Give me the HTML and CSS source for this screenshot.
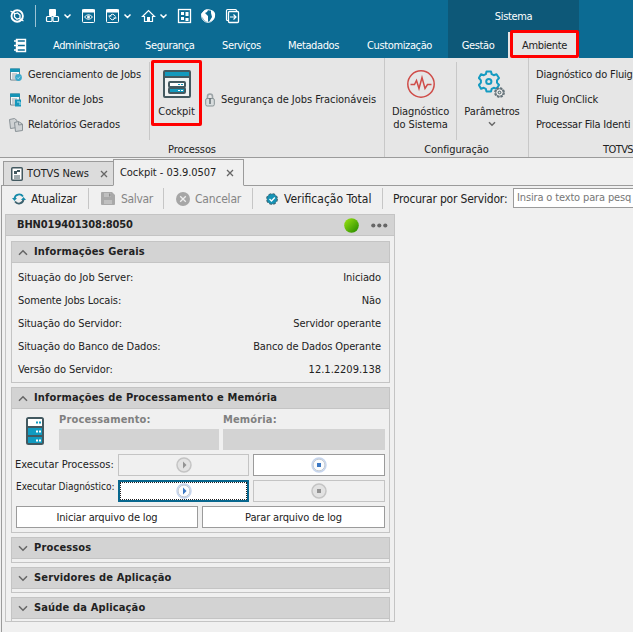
FILE: index.html
```html
<!DOCTYPE html>
<html lang="pt-BR">
<head>
<meta charset="utf-8">
<title>Cockpit</title>
<link rel="stylesheet" href="styles.css">
</head>
<body>
<header class="top">
  <div class="quick">
    <svg class="quick-icons" width="250" height="32" viewBox="0 0 250 32" fill="none" stroke="#fff">
      <circle cx="17.200" cy="16" r="5.700" stroke-width="1.900"/>
      <path d="M14.500 14l3-1 2.500 2v3l-3 1.200-2.500-2.200zM10.500 11l4.500 2.500M23.500 21l-4.500-2.500" stroke-width="1.300"/>
      <path d="M35.500 5v22" stroke="#9cc3d4"/>
      <rect x="49" y="9" width="7" height="7" rx="1" fill="#fff" stroke="none"/>
      <rect x="46.500" y="16.500" width="5.500" height="5" rx="1" stroke-width="1.200"/><rect x="53" y="16.500" width="5.500" height="5" rx="1" stroke-width="1.200"/>
      <path d="M64.500 14.500l3 3 3-3M124.500 14.500l3 3 3-3M160.500 14.500l3 3 3-3" stroke-width="1.500"/>
      <rect x="82.500" y="9.500" width="12" height="13" rx="1"/><path d="M82 11h13" stroke-width="3"/>
      <path d="M84.500 17q4-4.500 8 0q-4 4.500-8 0z"/><circle cx="88.500" cy="17" r="1" fill="#fff"/>
      <rect x="106.500" y="9.500" width="12" height="13" rx="1"/><path d="M106 11h13" stroke-width="3"/>
      <path d="M109.500 16.500q3-4.500 6 0M109.500 17.500q3 4.500 6 0M108.500 16h3M113.500 18h3"/>
      <path d="M142.500 16.500l6-6 6 6h-2v5h-8v-5z" stroke-width="1.200"/><path d="M147 17h3v5h-3z" fill="#fff" stroke="none"/>
      <rect x="178.500" y="9.500" width="12" height="13" stroke-width="1.300"/><path d="M181 12h3v3h-3zM185.500 12h3v4h-3zM181 17h3v3h-3zM185.500 18h3v3h-3z" fill="#fff" stroke="none"/>
      <circle cx="208" cy="16" r="6.300"/><path d="M202 13q3-5 6-3l-1 2-2 1 3 3v6q-5-1-7-8M211 10q5 1 4 6.500-1 4-6 5.500l3-5-1-4z" fill="#fff" stroke="none"/>
      <rect x="226.500" y="9.500" width="10" height="11" rx="1" stroke-width="1.200"/><rect x="228.500" y="11.500" width="10" height="11" rx="1" fill="#0c6b93" stroke-width="1.300"/><path d="M230 17h6M233.500 14.500l2.500 2.500-2.500 2.500" stroke-width="1.200"/>
    </svg>
    <div class="context">Sistema</div>
  </div>
  <nav class="menu">
    <svg class="menu-icon" width="13" height="15" viewBox="0 0 13 15" fill="none" stroke="#fff"><path d="M2.500 1.500h9v3h-9zM2.500 6h9v3h-9zM2.500 10.500h9v3h-9z" stroke-width="1.400"/><path d="M0 3h4M0 7.500h4M0 12h4" stroke-width="1.500"/></svg>
    <a class="m1">Administração</a><a class="m2">Segurança</a><a class="m3">Serviços</a><a class="m4">Metadados</a><a class="m5">Customização</a><a class="m6">Gestão</a><a class="active"><span>Ambiente</span></a>
  </nav>
</header>

<section class="ribbon">
  <div class="group g-proc">
    <div class="group-body">
      <ul class="jobs">
        <li><svg width="14" height="14" viewBox="0 0 14 14"><path d="M1.500 1h9v11h-9z" fill="#f4f6f7" stroke="#71818a"/><path d="M1 .5h10v3.500H1z" fill="#1693b5"/><path d="M3 6h5M3 8h4M3 10h3" stroke="#9aa5aa"/><circle cx="9.500" cy="9.500" r="3.400" fill="#39a9cc"/><path d="M8 9.500l1.200 1.300L11 8.500" fill="none" stroke="#a9e0f0"/></svg>Gerenciamento de Jobs</li>
        <li><svg width="14" height="14" viewBox="0 0 14 14"><path d="M1.500 1h9v11h-9z" fill="#f4f6f7" stroke="#71818a"/><path d="M1 .5h10v3.500H1z" fill="#1693b5"/><path d="M3 6h5M3 8h4M3 10h3" stroke="#9aa5aa"/><path d="M6 6.500h6v7H6z" fill="#1597bc"/><path d="M8 9h3v3" fill="none" stroke="#a9e0f0"/></svg>Monitor de Jobs</li>
        <li><svg width="14" height="14" viewBox="0 0 14 14" fill="#cfd2d4" stroke="#8a9297"><path d="M.5 1.500l5-1 2.500 2v7l-6.500 1z"/><path d="M5.500 4.500l4-1 4 2.500v6.500l-7 1z"/><path d="M9.500 3.500v3.500l4-.5" fill="none"/></svg>Relatórios Gerados</li>
      </ul>
      <button class="cockpit">
        <svg width="28" height="28" viewBox="0 0 28 28"><rect x="1" y="1" width="26" height="26" rx="1" fill="#f1f3f3" stroke="#435960" stroke-width="2"/><path d="M2 2h24v4H2z" fill="#1399bd"/><path d="M1 7h26" stroke="#435960" stroke-width="2"/><rect x="6" y="12" width="16" height="5" rx="1" fill="#fff" stroke="#435960" stroke-width="2"/><rect x="6" y="18" width="16" height="5" rx="1" fill="#1399bd" stroke="#435960" stroke-width="2"/><path d="M15 14.500h2m1 0h2" stroke="#1399bd"/><path d="M15 20.500h2m1 0h2" stroke="#fff"/></svg>
        <span>Cockpit</span>
      </button>
      <div class="lock"><svg width="10" height="14" viewBox="0 0 10 14"><path d="M2.500 6V3.500q0-2.500 2.500-2.500t2.500 2.500V6" fill="none" stroke="#9ca4a7" stroke-width="1.600"/><rect x=".7" y="5.500" width="8.600" height="7.500" rx="1.500" fill="#d8dcdd" stroke="#879294"/><path d="M5 5v6" stroke="#657175" stroke-width="1.500"/></svg><span>Segurança de Jobs Fracionáveis</span></div>
    </div>
    <div class="caption">Processos</div>
  </div>
  <div class="group g-conf">
    <div class="group-body">
      <div class="big diag">
        <svg width="28" height="28" viewBox="0 0 28 28" fill="none" stroke="#cf4c48" stroke-width="1.500"><circle cx="14" cy="14" r="13.200"/><path d="M3.500 14.500h4l2-4 2.500 8 3-11 3 11 2.500-4h4"/></svg>
        <span>Diagnóstico<br>do Sistema</span>
      </div>
      <div class="big param">
        <svg width="28" height="28" viewBox="0 0 28 28" fill="none"><path d="M8.500 1.500h4.500l.7 2.700 2 1 2.800-1 2.500 3.800-2 2.300v2.400l2 2.300-2.500 3.800-2.800-1-2 1-.7 2.700H8.500l-.7-2.700-2-1-2.800 1L.9 15l2-2.300v-2.400L.9 8 3 4.200l2.800 1 2-1z" stroke="#159bc1" stroke-width="2" stroke-linejoin="round"/><circle cx="10.800" cy="11.500" r="2.600" stroke="#159bc1" stroke-width="2"/><circle cx="21.500" cy="22.500" r="4.400" fill="#e6e6e6" stroke="#637178" stroke-width="2" stroke-dasharray="2.300 1.155"/><circle cx="21.500" cy="22.500" r="3.800" fill="#e6e6e6" stroke="#637178"/><circle cx="21.500" cy="22.500" r="1.300" stroke="#435960"/></svg>
        <span>Parâmetros</span>
        <svg class="drop" width="8" height="6" viewBox="0 0 8 6"><path d="M1 1.200l3 3 3-3" fill="none" stroke="#686868" stroke-width="1.500"/></svg>
      </div>
    </div>
    <div class="caption">Configuração</div>
  </div>
  <div class="group g-fluig">
    <ul><li>Diagnóstico do Fluig</li><li>Fluig OnClick</li><li>Processar Fila Identi</li></ul>
    <div class="caption">TOTVS</div>
  </div>
</section>

<div class="tabs">
  <div class="tab news"><svg width="12" height="14" viewBox="0 0 12 14"><rect x=".75" y=".75" width="10.500" height="12.500" rx="1" fill="#fff" stroke="#435960" stroke-width="1.500"/><path d="M3 4h3v3H3zM6 3h3v2H6z" fill="#435960"/><path d="M3 9h6M3 11h6" stroke="#435960"/></svg><span>TOTVS News</span><svg class="x" width="8" height="8" viewBox="0 0 8 8"><path d="M1 1l6 6M7 1l-6 6" stroke="#666" stroke-width="1.300"/></svg></div>
  <div class="tab current"><span>Cockpit - 03.9.0507</span><svg class="x" width="8" height="8" viewBox="0 0 8 8"><path d="M1 1l6 6M7 1l-6 6" stroke="#666" stroke-width="1.300"/></svg></div>
  <div class="tab-rest"></div>
</div>

<main class="page">
  <div class="toolbar">
    <div class="tool t1"><svg width="14" height="14" viewBox="0 0 14 14" fill="none" stroke="#168aa9" stroke-width="1.800"><path d="M2.500 6.500A4.700 4.700 0 0 1 11 4.500"/><path d="M11.500 7.500A4.700 4.700 0 0 1 3 9.500" stroke="#3d626f"/><path d="M0 6h5L2.500 9z" fill="#168aa9" stroke="none"/><path d="M9 8h5l-2.500-3z" fill="#168aa9" stroke="none"/></svg><span>Atualizar</span></div>
    <div class="tool t2 off"><svg width="14" height="13" viewBox="0 0 14 13"><path d="M0 1q0-1 1-1h10l3 3v9q0 1-1 1H1q-1 0-1-1z" fill="#a9a9a9"/><path d="M3 1h7v4H3zM3 8h8v4H3z" fill="#c0c0c0"/><path d="M8 1.500h1.500v3H8z" fill="#8e8e8e"/></svg><span>Salvar</span></div>
    <div class="tool t3 off"><svg width="14" height="14" viewBox="0 0 14 14"><circle cx="7" cy="7" r="7" fill="#a6a6a6"/><path d="M4.200 4.200l5.600 5.600m0-5.600L4.200 9.800" stroke="#eee" stroke-width="1.300"/></svg><span>Cancelar</span></div>
    <div class="tool t4"><svg width="12" height="12" viewBox="0 0 12 12"><circle cx="6" cy="6" r="5" fill="#1593b6" stroke="#3c606d" stroke-width="1.800" stroke-dasharray="2.500 1.430"/><circle cx="6" cy="6" r="4.900" fill="#1593b6" stroke="#2d7c94" stroke-width=".6"/><path d="M3.500 6l2 2 3.300-3.500" fill="none" stroke="#fff" stroke-width="1.300"/></svg><span>Verificação Total</span></div>
    <div class="tool t5"><span>Procurar por Servidor:</span></div>
    <div class="search">Insira o texto para pesq</div>
  </div>

  <article class="server">
    <div class="server-head"><b>BHN019401308:8050</b><svg width="15" height="15" viewBox="0 0 15 15"><defs><linearGradient id="g" x1="0" y1="0" x2="1" y2="1"><stop offset=".1" stop-color="#91dc10"/><stop offset=".9" stop-color="#2d9000"/></linearGradient></defs><circle cx="7.500" cy="7.500" r="7.300" fill="url(#g)"/></svg><svg class="dots" width="17" height="5" viewBox="0 0 17 5" fill="#666"><circle cx="2.300" cy="2.500" r="2.100"/><circle cx="8.300" cy="2.500" r="2.100"/><circle cx="14.300" cy="2.500" r="2.100"/></svg></div>
    <section class="box info">
      <h2><svg width="10" height="7" viewBox="0 0 10 7"><path d="M1 5.700l4-4 4 4"/></svg><span>Informações Gerais</span></h2>
      <dl>
        <div><dt class="loose">Situação do Job Server:</dt><dd>Iniciado</dd></div>
        <div><dt>Somente Jobs Locais:</dt><dd>Não</dd></div>
        <div><dt>Situação do Servidor:</dt><dd>Servidor operante</dd></div>
        <div><dt>Situação do Banco de Dados:</dt><dd>Banco de Dados Operante</dd></div>
        <div><dt>Versão do Servidor:</dt><dd class="ver">12.1.2209.138</dd></div>
      </dl>
    </section>
    <section class="box mem">
      <h2><svg width="10" height="7" viewBox="0 0 10 7"><path d="M1 5.700l4-4 4 4"/></svg><span>Informações de Processamento e Memória</span></h2>
      <div class="meters">
        <svg width="18" height="28" viewBox="0 0 18 28"><rect x="1" y="1" width="16" height="26" rx="1.500" fill="#119bc1" stroke="#435960" stroke-width="2"/><path d="M2 2h14v7H2z" fill="#fff"/><path d="M1 10h16M1 19h16" stroke="#435960" stroke-width="2"/><path d="M10 5.500h2m1 0h2" stroke="#119bc1" stroke-width="2"/><path d="M10 14.500h2m1 0h2M10 23.500h2m1 0h2" stroke="#fff" stroke-width="2"/></svg>
        <div class="meter cpu"><b>Processamento:</b><i></i></div>
        <div class="meter ram"><b>Memória:</b><i></i></div>
      </div>
      <div class="run"><label>Executar Processos:</label>
        <button class="disabled"><svg width="16" height="16" viewBox="0 0 16 16"><circle cx="8" cy="8" r="7" fill="#e2e2e2" stroke="#c4c4c4" stroke-width="1.500"/><path d="M7 4.500L10.500 8 7 11.500z" fill="#929292"/></svg></button>
        <button><svg width="16" height="16" viewBox="0 0 16 16"><circle cx="8" cy="8" r="7" fill="#fbfcfd" stroke="#c6d6ef" stroke-width="1.500"/><circle cx="8" cy="8" r="5.900" fill="none" stroke="#c0c7d0"/><path d="M6 6h4v4H6z" fill="#3b78c4"/></svg></button>
      </div>
      <div class="run second"><label>Executar Diagnóstico:</label>
        <button class="focus"><svg width="16" height="16" viewBox="0 0 16 16"><circle cx="8" cy="8" r="7" fill="#fbfcfd" stroke="#c6d6ef" stroke-width="1.500"/><circle cx="8" cy="8" r="5.900" fill="none" stroke="#c0c7d0"/><path d="M7 4.500L10.500 8 7 11.500z" fill="#3b78c4"/></svg></button>
        <button class="disabled"><svg width="16" height="16" viewBox="0 0 16 16"><circle cx="8" cy="8" r="7" fill="#e2e2e2" stroke="#c4c4c4" stroke-width="1.500"/><path d="M6 6h4v4H6z" fill="#929292"/></svg></button>
      </div>
      <div class="logs"><button>Iniciar arquivo de log</button><button>Parar arquivo de log</button></div>
    </section>
    <section class="box closed"><h2><svg width="10" height="7" viewBox="0 0 10 7"><path d="M1 1.300l4 4 4-4"/></svg><span>Processos</span></h2></section>
    <section class="box closed"><h2><svg width="10" height="7" viewBox="0 0 10 7"><path d="M1 1.300l4 4 4-4"/></svg><span>Servidores de Aplicação</span></h2></section>
    <section class="box closed last"><h2><svg width="10" height="7" viewBox="0 0 10 7"><path d="M1 1.300l4 4 4-4"/></svg><span>Saúde da Aplicação</span></h2></section>
  </article>
</main>
</body>
</html>
```
FILE: styles.css
```css
* { box-sizing: border-box; }
html, body { margin: 0; height: 632px; overflow: hidden; }
body { background: #f0f0f0; color: #222; font: 11px/14px "DejaVu Sans Condensed", "DejaVu Sans", sans-serif; font-stretch: condensed; letter-spacing: -.1px; white-space: nowrap; }
ul, dl, dd, h2 { margin: 0; padding: 0; list-style: none; }
svg { display: block; flex: none; }
button { font: inherit; letter-spacing: inherit; color: inherit; padding: 0; border-radius: 0; }

.top { height: 58px; background: #0c6b93; color: #fff; letter-spacing: -.37px; }
.quick { display: flex; height: 32px; }
.context { margin-left: 198px; width: 131px; background: #0d5878; text-align: center; line-height: 33px; }
.menu { display: flex; height: 26px; line-height: 28px; }
.menu-icon { margin: 6px 26px 0 14px; }
.menu a { flex: none; }
.m1 { width: 92px; }
.m2 { width: 77px; }
.m3 { width: 66px; }
.m4 { width: 79px; }
.m5 { width: 81px; }
.m6 { width: 60px; background: #0d5878; text-align: center; }
.active { width: 71px; background: #e6e6e6; color: #222; padding-left: 2px; }
.active span { display: block; height: 28px; margin-top: -2px; border: 3px solid #f00; border-radius: 2px; text-align: center; line-height: 25px; }

.ribbon { display: flex; height: 100px; background: #e6e6e6; border-bottom: 1px solid #9b9b9b; overflow: hidden; }
.group { flex: none; border-right: 1px solid #c8c8c8; }
.group-body { display: flex; height: 82px; }
.caption { text-align: center; line-height: 19px; }
.g-proc { width: 385px; }
.g-conf { width: 144px; }
.g-fluig { width: 104px; border: 0; letter-spacing: -.2px; }
.g-fluig ul { height: 82px; padding: 4px 0 0 7px; }
.g-fluig li { line-height: 25px; }
.g-fluig .caption { text-align: right; letter-spacing: -.6px; }
.jobs { width: 150px; height: 78px; margin-top: 4px; border-right: 1px solid #c8c8c8; padding-left: 9px; }
.jobs li { display: flex; align-items: center; gap: 5px; height: 25px; }
.cockpit { width: 51px; height: 66px; margin: 2px 0 0 1px; border: 3px solid #f00; border-radius: 2px; background: none; display: flex; flex-direction: column; align-items: center; padding-top: 7px; }
.cockpit span { margin-top: 7px; }
.lock { display: flex; align-items: center; height: 25px; margin: 29px 0 0 3px; gap: 6px; letter-spacing: -.05px; }
.big { display: flex; flex-direction: column; align-items: center; height: 78px; margin-top: 4px; padding-top: 8px; text-align: center; }
.big span { margin-top: 7px; line-height: 13px; }
.diag { width: 72px; border-right: 1px solid #c8c8c8; }
.param { width: 70px; }
.drop { margin-top: 3px; }

.tabs { display: flex; height: 28px; padding-top: 1px; align-items: flex-end; }
.tab { display: flex; align-items: center; border: 1px solid #9b9b9b; }
.tabs::before { content: ""; align-self: stretch; width: 2px; margin-left: 1px; border-bottom: 1px solid #9b9b9b; }
.news { width: 110px; height: 25px; background: #dcdcdc; padding-left: 7px; border-right: 0; }
.news span { width: 72px; margin-left: 4px; }
.news .x { margin-left: 1px; }
.current { width: 131px; height: 27px; border-bottom-color: #f0f0f0; padding-left: 6px; letter-spacing: -.05px; }
.current span { width: 99px; }
.current .x { margin-left: 7px; }
.tab-rest { flex: 1; align-self: stretch; border-bottom: 1px solid #9b9b9b; }

.page { margin-left: 1px; border-left: 1px solid #9b9b9b; height: 446px; }
.toolbar { display: flex; height: 25px; padding-top: 2px; font-size: 12px; letter-spacing: -.2px; overflow: hidden; }
.tool { display: flex; flex: none; align-items: center; height: 21px; border-right: 1px solid #c6c6c6; gap: 5px; }
.t1 { width: 87px; padding-left: 10px; }
.t2 { width: 75px; padding-left: 12px; gap: 6px; letter-spacing: -.35px; }
.t3 { width: 89px; padding-left: 12px; }
.t4 { width: 130px; padding-left: 13px; gap: 6px; letter-spacing: 0; }
.t5 { width: 130px; padding-left: 10px; border: 0; }
.off { color: #858585; }
.search { flex: none; width: 121px; height: 20px; border: 1px solid #9b9b9b; border-right: 0; background: #fff; color: #777; font-size: 11px; line-height: 18px; padding-left: 3px; letter-spacing: -.15px; }

.server { width: 390px; height: 408px; margin: 3px 0 0 3px; border: 1px solid #c4c4c4; overflow: hidden; }
.server-head { display: flex; align-items: center; height: 21px; background: #d3d3d3; border-bottom: 1px solid #c4c4c4; }
.server-head b { width: 338px; padding-left: 11px; letter-spacing: -.1px; }
.dots { margin-left: 12px; }
.box { width: 379px; margin: 5px 0 0 5px; border: 1px solid #c4c4c4; }
h2 { display: flex; align-items: center; height: 21px; background: #d3d3d3; border-bottom: 1px solid #c4c4c4; padding-left: 6px; gap: 6px; font-size: 11px; letter-spacing: .15px; }
h2 path { fill: none; stroke: #666; stroke-width: 1.5; }
.info { height: 142px; margin-top: 5px; }
.info dl { padding: 3px 8px 0 6px; }
.info dl div { display: flex; justify-content: space-between; height: 23px; line-height: 23px; }
.info .loose { letter-spacing: 0; }
.info .ver { letter-spacing: 0; }
.mem { height: 146px; margin-top: 4px; }
.meters { display: flex; height: 41px; padding-left: 14px; }
.meters > svg { margin: 8px 15px 0 0; }
.meter b { display: block; height: 20px; line-height: 22px; color: #808080; letter-spacing: .15px; }
.meter i { display: block; height: 21px; background: #d3d3d3; }
.cpu { width: 160px; margin-right: 4px; }
.ram { width: 162px; }
.run { display: flex; height: 22px; margin-top: 4px; padding-left: 3px; }
.run label { width: 103px; line-height: 22px; letter-spacing: 0; }
.run.second label { line-height: 14px; font-size: 10px; padding-left: 1px; }
.run button { width: 131px; margin-right: 4px; border: 1px solid #9b9b9b; background: #fff; display: flex; justify-content: center; align-items: center; }
.run button + button { width: 132px; }
.run .disabled { border-color: #c4c4c4; background: #f0f0f0; }
.run .focus { border: 2px solid #08678e; outline: 1px dotted #222; outline-offset: -3px; }
.logs { display: flex; gap: 4px; height: 22px; margin: 4px 0 0 4px; }
.logs button { width: 182px; border: 1px solid #9b9b9b; background: #fff; padding-top: 1px; letter-spacing: -.15px; }
.logs button + button { width: 183px; }
.closed { height: 26px; margin-top: 4px; }
```
